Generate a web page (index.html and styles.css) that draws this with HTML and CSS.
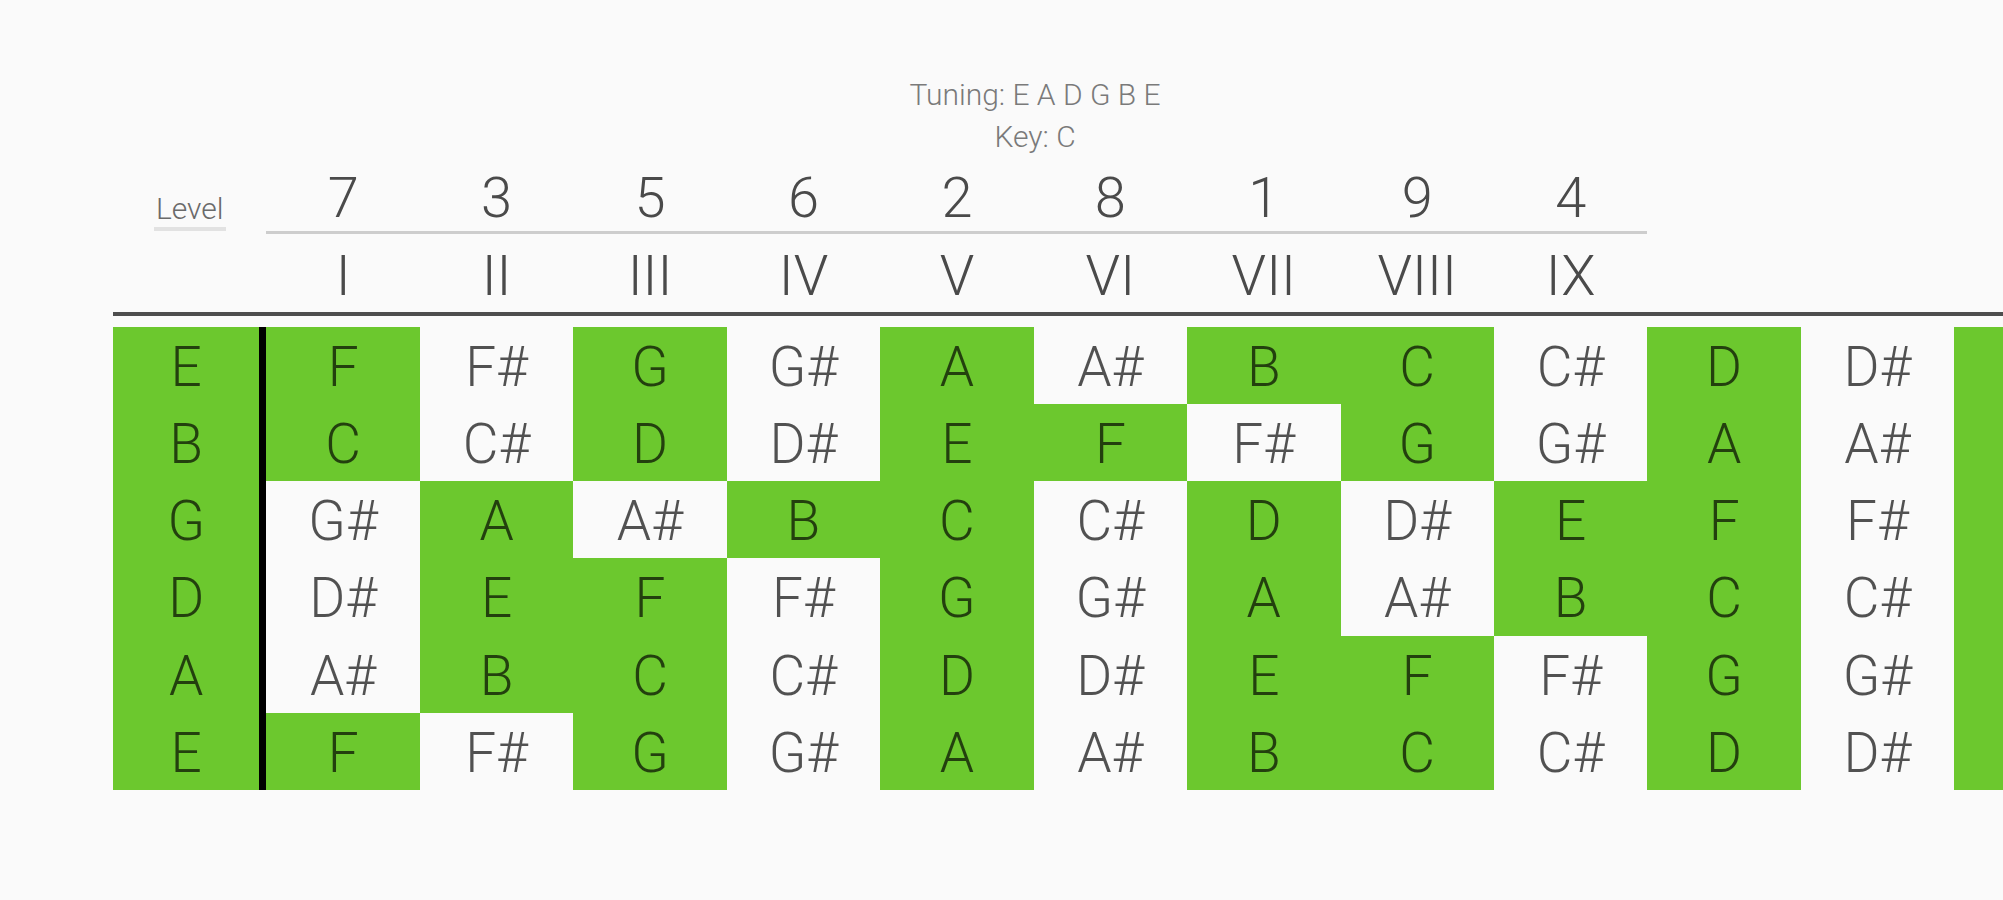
FILE: index.html
```html
<!DOCTYPE html>
<html>
<head>
<meta charset="utf-8">
<link rel="stylesheet" href="styles.css">
</head>
<body>
<div class="page">
  <div class="info">
    <div>Tuning: E A D G B E</div>
    <div>Key: C</div>
  </div>
  <div class="head">
    <div class="row nums">
      <div class="lvl-cell"><span class="level">Level</span></div>
      <div class="num">7</div><div class="num">3</div><div class="num">5</div><div class="num">6</div><div class="num">2</div><div class="num">8</div><div class="num">1</div><div class="num">9</div><div class="num">4</div>
    </div>
    <div class="row romans">
      <div></div>
      <div class="rom">I</div><div class="rom">II</div><div class="rom">III</div><div class="rom">IV</div><div class="rom">V</div><div class="rom">VI</div><div class="rom">VII</div><div class="rom">VIII</div><div class="rom">IX</div>
    </div>
  </div>
  <div class="board">
    <div class="n open on">E</div><div class="n on">F</div><div class="n">F#</div><div class="n on">G</div><div class="n">G#</div><div class="n on">A</div><div class="n">A#</div><div class="n on">B</div><div class="n on">C</div><div class="n">C#</div><div class="n on">D</div><div class="n">D#</div><div class="n on"></div>
    <div class="n open on">B</div><div class="n on">C</div><div class="n">C#</div><div class="n on">D</div><div class="n">D#</div><div class="n on">E</div><div class="n on">F</div><div class="n">F#</div><div class="n on">G</div><div class="n">G#</div><div class="n on">A</div><div class="n">A#</div><div class="n on"></div>
    <div class="n open on">G</div><div class="n">G#</div><div class="n on">A</div><div class="n">A#</div><div class="n on">B</div><div class="n on">C</div><div class="n">C#</div><div class="n on">D</div><div class="n">D#</div><div class="n on">E</div><div class="n on">F</div><div class="n">F#</div><div class="n on"></div>
    <div class="n open on">D</div><div class="n">D#</div><div class="n on">E</div><div class="n on">F</div><div class="n">F#</div><div class="n on">G</div><div class="n">G#</div><div class="n on">A</div><div class="n">A#</div><div class="n on">B</div><div class="n on">C</div><div class="n">C#</div><div class="n on"></div>
    <div class="n open on">A</div><div class="n">A#</div><div class="n on">B</div><div class="n on">C</div><div class="n">C#</div><div class="n on">D</div><div class="n">D#</div><div class="n on">E</div><div class="n on">F</div><div class="n">F#</div><div class="n on">G</div><div class="n">G#</div><div class="n on"></div>
    <div class="n open on">E</div><div class="n on">F</div><div class="n">F#</div><div class="n on">G</div><div class="n">G#</div><div class="n on">A</div><div class="n">A#</div><div class="n on">B</div><div class="n on">C</div><div class="n">C#</div><div class="n on">D</div><div class="n">D#</div><div class="n on"></div>
  </div>
</div>
</body>
</html>
```
FILE: styles.css
```css
html, body {
  margin: 0;
  padding: 0;
  background: #fafafa;
  overflow: hidden;
}
body {
  font-family: Roboto, "Liberation Sans", sans-serif;
  font-weight: 300;
  width: 2003px;
  height: 900px;
}
.page {
  padding: 74px 0 0 113px;
  width: 1995px;
}
.info {
  width: 1844px;
  text-align: center;
  font-size: 30px;
  line-height: 42px;
  color: #7a7a7a;
}
.head {
  border-bottom: 4px solid #4e4e4e;
}
.row {
  display: grid;
  grid-template-columns: repeat(13, 153.45px);
}
.nums {
  margin-top: 12px;
  align-items: end;
}
.lvl-cell {
  text-align: center;
}
.level {
  display: inline-block;
  font-size: 30px;
  line-height: 36px;
  color: #6a6a6a;
  padding: 0 2px;
  border-bottom: 4px solid #e2e2e2;
  margin-bottom: 3px;
}
.num {
  text-align: center;
  font-size: 56px;
  line-height: 56px;
  color: #4a4a4a;
  padding-bottom: 5px;
  border-bottom: 3px solid #cdcdcd;
}
.romans {
  padding: 14px 0 8px;
}
.rom {
  text-align: center;
  font-size: 56px;
  line-height: 56px;
  color: #4a4a4a;
}
.board {
  margin-top: 11px;
  display: grid;
  grid-template-columns: repeat(13, 153.45px);
  grid-auto-rows: 77.17px;
}
.n {
  box-sizing: border-box;
  text-align: center;
  font-size: 55px;
  line-height: 73px;
  padding-top: 4px;
  color: rgba(0, 0, 0, 0.68);
}
.n.on {
  background: #6cc82e;
}
.n.open {
  border-right: 7px solid #000;
}
```
